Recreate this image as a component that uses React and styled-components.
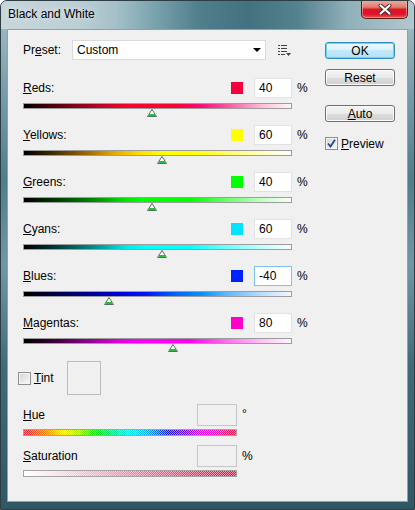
import React from "react";
import styled, { createGlobalStyle } from "styled-components";

const GlobalStyle = createGlobalStyle`
  html, body {
    margin: 0;
    padding: 0;
    background: #ffffff;
  }
  body {
    font-family: "Liberation Sans", Arial, sans-serif;
    font-size: 12px;
    color: #000;
  }
`;

const CHANNELS = [
  {
    name: "Reds",
    key: "R",
    value: 40,
    swatch: "#f5003a",
    ramp: "#000 0%, #4a000c 10%, #b00020 26%, #ff0030 40%, #ff0034 58%, #ff0a7a 66%, #ff62a8 78%, #ffc4dc 90%, #fff4f8 100%",
  },
  {
    name: "Yellows",
    key: "Y",
    value: 60,
    swatch: "#ffff00",
    ramp: "#000 0%, #3a2800 10%, #a06c00 24%, #e8aa00 34%, #ffe000 44%, #ffff00 52%, #ffff00 64%, #ffff70 78%, #ffffd0 92%, #fffff4 100%",
  },
  {
    name: "Greens",
    key: "G",
    value: 40,
    swatch: "#00ff00",
    ramp: "#000 0%, #003000 10%, #008a00 26%, #00e800 38%, #00ff00 44%, #00ff00 62%, #6cff6c 76%, #caffca 90%, #f4fff4 100%",
  },
  {
    name: "Cyans",
    key: "C",
    value: 60,
    swatch: "#00e4ff",
    ramp: "#000 0%, #002e2e 10%, #008c8c 26%, #00e8e8 38%, #00ffff 46%, #00ffff 62%, #6cffff 76%, #c8ffff 90%, #f4ffff 100%",
  },
  {
    name: "Blues",
    key: "B",
    value: -40,
    swatch: "#0022ff",
    ramp: "#000 0%, #00003a 10%, #000090 24%, #0000e0 36%, #0018ff 46%, #0060ff 56%, #0090ff 66%, #60b8ff 76%, #c0e0ff 90%, #f2f8ff 100%",
  },
  {
    name: "Magentas",
    key: "M",
    value: 80,
    swatch: "#ff00cc",
    ramp: "#000 0%, #300030 10%, #900090 24%, #e000e0 36%, #ff00ff 44%, #ff00ee 62%, #ff70f0 76%, #ffc8f6 90%, #fff4fd 100%",
  },
];

const Window = styled.div`
  width: 415px;
  height: 510px;
  box-sizing: border-box;
  display: flex;
  flex-direction: column;
  border: 1px solid #2c3d44;
  border-radius: 7px 7px 0 0;
  overflow: hidden;
  background: linear-gradient(
    180deg,
    #a9c2ca 0%,
    #7fa3ae 15%,
    #4f7d8a 35%,
    #6f98a4 52%,
    #3f6b78 72%,
    #2f5864 100%
  );
`;

const TitleBar = styled.div`
  height: 28px;
  display: flex;
  align-items: flex-start;
  padding-left: 7px;
  background: linear-gradient(
    90deg,
    #c8d6db 0%,
    #bccfd5 18%,
    #a4c0c8 28%,
    #76a0ab 38%,
    #4f7f8c 48%,
    #427280 60%,
    #55828f 72%,
    #90b0ba 84%,
    #b2c7ce 100%
  );
`;

const Title = styled.div`
  padding-top: 6px;
  line-height: 15px;
  font-size: 12px;
  color: #000;
  text-shadow: 0 0 6px rgba(255, 255, 255, 0.9);
`;

const CloseButton = styled.div`
  margin-left: auto;
  margin-right: 6px;
  margin-top: -1px;
  width: 47px;
  height: 19px;
  box-sizing: border-box;
  display: flex;
  align-items: center;
  justify-content: center;
  border: 1px solid #5e1a14;
  border-top: none;
  border-radius: 0 0 5px 5px;
  background: linear-gradient(
    180deg,
    #eeb0a6 0%,
    #e27c6c 40%,
    #d61a26 52%,
    #e2102a 78%,
    #f2584c 100%
  );
  box-shadow: inset 0 0 0 1px rgba(255, 200, 190, 0.5);
`;

const Client = styled.div`
  flex: 1;
  margin: 0 6px 7px 6px;
  box-sizing: border-box;
  border: 1px solid #8ba2aa;
  background: #f0f0f0;
  display: flex;
  gap: 17px;
  padding: 10px 0 0 15px;
`;

const LeftColumn = styled.div`
  width: 285px;
  display: flex;
  flex-direction: column;
`;

const RightColumn = styled.div`
  width: 70px;
  display: flex;
  flex-direction: column;
  padding-top: 2px;
`;

const PresetRow = styled.div`
  display: flex;
  align-items: center;
  height: 20px;
`;

const PresetLabel = styled.span`
  width: 49px;
`;

const Select = styled.div`
  width: 194px;
  height: 20px;
  box-sizing: border-box;
  border: 1px solid #dadada;
  background: #fff;
  display: flex;
  align-items: center;
  justify-content: space-between;
  padding: 0 4px 0 4px;
`;

const ListIcon = styled.svg`
  margin-left: 12px;
`;

const Channels = styled.div`
  margin-top: 18px;
  display: flex;
  flex-direction: column;
`;

const ChannelBlock = styled.div`
  height: 47px;
`;

const ChannelTop = styled.div`
  display: flex;
  align-items: center;
  height: 20px;
`;

const ChannelLabel = styled.span`
  flex: 1;
`;

const Swatch = styled.span`
  width: 12px;
  height: 12px;
  margin-right: 11px;
  background: ${(p) => p.color};
`;

const ValueBox = styled.div`
  width: 38px;
  height: 20px;
  box-sizing: border-box;
  border: 1px solid ${(p) => (p.focused ? "#7ec4ea" : "#e2e2e2")};
  background: #fff;
  padding-left: 4px;
  line-height: 18px;
  font-size: 12px;
`;

const Unit = styled.span`
  margin-left: 5px;
  width: ${(p) => p.w || 14}px;
  font-size: 12px;
`;

const Track = styled.div`
  position: relative;
  width: 269px;
  height: 6px;
  margin-top: 5px;
  box-sizing: border-box;
  border: 1px solid #9c9c9c;
  background: linear-gradient(90deg, ${(p) => p.ramp});
`;

const Thumb = styled.svg`
  position: absolute;
  top: 5px;
`;

const TintRow = styled.div`
  display: flex;
  align-items: center;
  height: 34px;
  margin-top: 1px;
  margin-left: -5px;
`;

const Check = styled.span`
  width: 13px;
  height: 13px;
  box-sizing: border-box;
  border: 1px solid #8e8f8f;
  background: linear-gradient(135deg, #d4d4d4 0%, #eaeaea 60%, #fbfbfb 100%);
  box-shadow: inset 0 0 0 1px #f4f4f4;
  display: flex;
  align-items: center;
  justify-content: center;
`;

const TintLabel = styled.span`
  width: 33px;
  margin-left: 3px;
`;

const TintSwatch = styled.div`
  width: 34px;
  height: 34px;
  box-sizing: border-box;
  border: 1px solid #bcbcbc;
  background: #f0f0f0;
`;

const FieldRow = styled.div`
  display: flex;
  align-items: center;
  width: 233px;
  height: 22px;
  margin-top: ${(p) => p.gap}px;
`;

const FieldLabel = styled.span`
  flex: 1;
`;

const DisabledBox = styled.div`
  width: 40px;
  height: 22px;
  box-sizing: border-box;
  border: 1px solid #c6c6c6;
  background: #f0f0f0;
`;

const DegreeUnit = styled.span`
  margin-left: 5px;
  width: 14px;
  align-self: flex-start;
  font-size: 12px;
  line-height: 12px;
  margin-top: 4px;
`;

const DitherBar = styled.div`
  width: 214px;
  height: 7px;
  margin-top: 3px;
  box-sizing: border-box;
  border: 1px solid #a4a4a4;
  background:
    repeating-conic-gradient(rgba(255, 255, 255, 0.55) 0% 25%, transparent 0% 50%) 0 0 / 2px 2px,
    linear-gradient(90deg, ${(p) => p.ramp});
`;

const Button = styled.div`
  height: 17px;
  box-sizing: border-box;
  margin-top: ${(p) => p.gap || 0}px;
  border: 1px solid ${(p) => (p.primary ? "#2f8fc4" : "#707070")};
  border-radius: 3px;
  display: flex;
  align-items: center;
  justify-content: center;
  font-size: 12px;
  background: ${(p) =>
    p.primary
      ? "linear-gradient(180deg, #eaf7fd 0%, #dcf2fc 50%, #c4e9fb 50%, #b2e0f7 100%)"
      : "linear-gradient(180deg, #f4f4f4 0%, #ebebeb 50%, #dddddd 50%, #d0d0d0 100%)"};
  box-shadow: ${(p) =>
    p.primary ? "inset 0 0 0 1px #6ad6f6" : "inset 0 0 0 1px #fbfbfb"};
`;

const PreviewRow = styled.div`
  display: flex;
  align-items: center;
  margin-top: 15px;
  height: 13px;
`;

const PreviewLabel = styled.span`
  margin-left: 3px;
`;

function Slider({ channel }) {
  const center = ((channel.value + 200) / 500) * 268;
  return (
    <Track ramp={channel.ramp}>
      <Thumb
        width="10"
        height="8"
        viewBox="0 0 10 8"
        style={{ left: `${Math.round(center - 5) - 1}px` }}
      >
        <polygon points="5,0.5 9.5,7.5 0.5,7.5" fill="#ffffff" stroke="#55705a" strokeWidth="1" />
        <rect x="2" y="5" width="6" height="2" fill="#22c03a" />
      </Thumb>
    </Track>
  );
}

function Channel({ channel }) {
  const rest = channel.name.slice(1);
  return (
    <ChannelBlock>
      <ChannelTop>
        <ChannelLabel>
          <u>{channel.name[0]}</u>
          {rest}:
        </ChannelLabel>
        <Swatch color={channel.swatch} />
        <ValueBox focused={channel.value < 0}>{channel.value}</ValueBox>
        <Unit w={11}>%</Unit>
      </ChannelTop>
      <Slider channel={channel} />
    </ChannelBlock>
  );
}

export default function App() {
  return (
    <>
      <GlobalStyle />
      <Window>
        <TitleBar>
          <Title>Black and White</Title>
          <CloseButton>
            <svg width="14" height="11" viewBox="0 0 14 11">
              <path d="M2.5 1.5 L11.5 9.5 M11.5 1.5 L2.5 9.5" stroke="#4a2a2a" strokeWidth="4" strokeLinecap="round" />
              <path d="M2.5 1.5 L11.5 9.5 M11.5 1.5 L2.5 9.5" stroke="#ffffff" strokeWidth="2.2" strokeLinecap="round" />
            </svg>
          </CloseButton>
        </TitleBar>
        <Client>
          <LeftColumn>
            <PresetRow>
              <PresetLabel>
                Pr<u>e</u>set:
              </PresetLabel>
              <Select>
                <span>Custom</span>
                <svg width="8" height="4" viewBox="0 0 8 4">
                  <polygon points="0,0 8,0 4,4" fill="#000" />
                </svg>
              </Select>
              <ListIcon width="13" height="11" viewBox="0 0 13 11">
                <g fill="#444">
                  <rect x="0" y="0" width="2" height="1" />
                  <rect x="3" y="0" width="6" height="1" />
                  <rect x="0" y="3" width="2" height="1" />
                  <rect x="3" y="3" width="6" height="1" />
                  <rect x="0" y="6" width="2" height="1" />
                  <rect x="3" y="6" width="6" height="1" />
                  <rect x="0" y="9" width="2" height="1" />
                  <rect x="3" y="9" width="4" height="1" />
                  <polygon points="8,8 13,8 10.5,11" />
                </g>
              </ListIcon>
            </PresetRow>
            <Channels>
              {CHANNELS.map((c) => (
                <Channel key={c.key} channel={c} />
              ))}
            </Channels>
            <TintRow>
              <Check />
              <TintLabel>
                <u>T</u>int
              </TintLabel>
              <TintSwatch />
            </TintRow>
            <FieldRow gap={9}>
              <FieldLabel>
                <u>H</u>ue
              </FieldLabel>
              <DisabledBox />
              <DegreeUnit>°</DegreeUnit>
            </FieldRow>
            <DitherBar ramp="#ff1030 0%, #ff7a00 10%, #ffe600 18%, #a0f000 26%, #00e000 34%, #00e6a0 44%, #00e8f0 50%, #0090ff 60%, #1010f0 68%, #8000ff 78%, #ff00f0 86%, #ff1080 94%, #ff1030 100%" />
            <FieldRow gap={9}>
              <FieldLabel>
                <u>S</u>aturation
              </FieldLabel>
              <DisabledBox />
              <Unit>%</Unit>
            </FieldRow>
            <DitherBar ramp="#ffffff 0%, #ffc8dc 22%, #ff7aa8 50%, #ff2a64 80%, #ff0040 100%" />
          </LeftColumn>
          <RightColumn>
            <Button primary>OK</Button>
            <Button gap={10}>Reset</Button>
            <Button gap={19}>
              <span>
                <u>A</u>uto
              </span>
            </Button>
            <PreviewRow>
              <Check>
                <svg width="9" height="9" viewBox="0 0 9 9">
                  <path d="M1 4.5 L3.5 7.5 L8 0.8" stroke="#23468f" strokeWidth="1.8" fill="none" />
                </svg>
              </Check>
              <PreviewLabel>
                <u>P</u>review
              </PreviewLabel>
            </PreviewRow>
          </RightColumn>
        </Client>
      </Window>
    </>
  );
}
